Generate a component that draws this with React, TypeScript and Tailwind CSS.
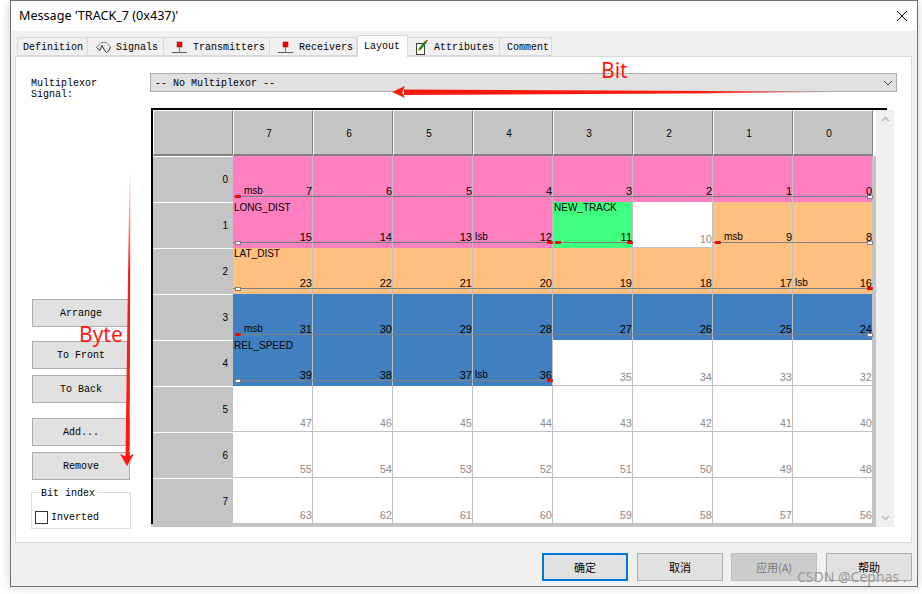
import React from "react";

type Bar = { left: number; width: number; startRed: boolean; endRed: boolean };
type Tag = { text: string; left: number; top: number };

// cell colours for the eight data rows, most significant bit first
const P = "bg-[#ff80c0]";
const O = "bg-[#ffc080]";
const G = "bg-[#40ff80]";
const B = "bg-[#4080c0]";
const W = "bg-white";

const rows: { fills: string[]; bars: Bar[]; tags: Tag[] }[] = [
  {
    fills: [P, P, P, P, P, P, P, P],
    bars: [{ left: 0, width: 640, startRed: true, endRed: false }],
    tags: [{ text: "msb", left: 11, top: 28 }],
  },
  {
    fills: [P, P, P, P, G, W, O, O],
    bars: [
      { left: 0, width: 320, startRed: false, endRed: true },
      { left: 320, width: 80, startRed: true, endRed: true },
      { left: 480, width: 160, startRed: true, endRed: false },
    ],
    tags: [
      { text: "LONG_DIST", left: 1, top: -1 },
      { text: "NEW_TRACK", left: 321, top: -1 },
      { text: "lsb", left: 242, top: 28 },
      { text: "msb", left: 491, top: 28 },
    ],
  },
  {
    fills: [O, O, O, O, O, O, O, O],
    bars: [{ left: 0, width: 640, startRed: false, endRed: true }],
    tags: [
      { text: "LAT_DIST", left: 1, top: -1 },
      { text: "lsb", left: 562, top: 28 },
    ],
  },
  {
    fills: [B, B, B, B, B, B, B, B],
    bars: [{ left: 0, width: 640, startRed: true, endRed: false }],
    tags: [{ text: "msb", left: 11, top: 28 }],
  },
  {
    fills: [B, B, B, B, W, W, W, W],
    bars: [{ left: 0, width: 320, startRed: false, endRed: true }],
    tags: [
      { text: "REL_SPEED", left: 1, top: -1 },
      { text: "lsb", left: 242, top: 28 },
    ],
  },
  { fills: [W, W, W, W, W, W, W, W], bars: [], tags: [] },
  { fills: [W, W, W, W, W, W, W, W], bars: [], tags: [] },
  { fills: [W, W, W, W, W, W, W, W], bars: [], tags: [] },
];

const sans = "font-['Liberation_Sans',Arial,sans-serif]";
const mono = "font-['Liberation_Mono','Courier_New',monospace]";
const cjk = "font-['Noto_Sans_CJK_SC','Noto_Sans',sans-serif]";

function WaveIcon() {
  return (
    <svg width="15" height="11" viewBox="0 0 15 11" fill="none">
      <path d="M0.5 5.5 L5 0.5 L10.5 0.5 L14.5 5" stroke="#8a8a8a" strokeWidth="1" />
      <path d="M0.5 5.5 L4 8.5 L6 3.5 L9 9 L10.5 10.5 L13 8.5 L14.5 5" stroke="#303030" strokeWidth="1" />
    </svg>
  );
}

function NodeIcon() {
  return (
    <svg width="15" height="14" viewBox="0 0 15 14" fill="none">
      <rect x="5" y="1" width="5" height="5" fill="#ff0000" stroke="#800000" strokeWidth="0.5" />
      <path d="M7.5 6 V11" stroke="#808080" />
      <path d="M0 11.5 H15" stroke="#606060" />
    </svg>
  );
}

function NoteIcon() {
  return (
    <svg width="13" height="15" viewBox="0 0 13 15" fill="none">
      <rect x="0.5" y="3.5" width="8" height="11" fill="#ffffff" stroke="#404040" />
      <path d="M3 10 L10 1.5" stroke="#208020" strokeWidth="2.4" />
      <path d="M10 1.5 L11.5 0" stroke="#c04000" strokeWidth="1.5" />
      <path d="M2.5 10.8 L3.5 9" stroke="#e0c000" strokeWidth="1.5" />
    </svg>
  );
}

function Tab({
  label,
  icon,
  layout,
  active,
}: {
  label: string;
  icon?: React.ReactNode;
  layout: string;
  active?: boolean;
}) {
  if (active) {
    return (
      <div
        className={`${layout} h-[22px] -mb-px z-10 bg-white border border-b-0 border-[#d9d9d9] pl-[6px] pt-[4px] text-[10px] leading-[13px] text-black`}
      >
        {label}
      </div>
    );
  }
  return (
    <div
      className={`${layout} h-[19px] flex items-center bg-[#f0f0f0] border border-l-0 first:border-l border-[#d9d9d9] pt-[2px] text-[10px] text-black`}
    >
      {icon}
      <span>{label}</span>
    </div>
  );
}

function SideButton({ label, className = "" }: { label: string; className?: string }) {
  return (
    <div
      className={`w-[98px] h-[28px] flex items-center justify-center bg-[#e1e1e1] border border-[#adadad] text-[10px] text-black ${className}`}
    >
      {label}
    </div>
  );
}

function DialogButton({
  label,
  variant = "normal",
  className = "",
}: {
  label: string;
  variant?: "normal" | "default" | "disabled";
  className?: string;
}) {
  const look =
    variant === "default"
      ? "border-2 border-[#0078d7] bg-[#e1e1e1] text-black"
      : variant === "disabled"
        ? "border border-[#bfbfbf] bg-[#cccccc] text-[#7a7a7a]"
        : "border border-[#adadad] bg-[#e1e1e1] text-black";
  return (
    <div className={`w-[86px] h-[28px] flex items-center justify-center text-[11px] ${cjk} ${look} ${className}`}>
      {label}
    </div>
  );
}

function Marker({ red, side }: { red: boolean; side: "left" | "right" }) {
  return (
    <div
      className={`absolute w-[6px] ${
        red
          ? "top-[-1px] h-[3px] bg-[#ff0000] border-x border-[#a04040]"
          : "top-[-1px] h-[4px] bg-white border border-[#808080]"
      } ${side === "left" ? "left-[2px]" : "right-0"}`}
    />
  );
}

function ColumnHead({ label }: { label: string }) {
  return (
    <div className="w-[80px] h-[46px] flex items-center justify-center pr-[8px] pt-[1px] bg-[#c4c4c4] border-t border-l border-t-white border-l-white border-b-2 border-r border-b-[#808080] border-r-[#808080] text-[10px] text-black">
      {label}
    </div>
  );
}

function ByteGrid() {
  return (
    <div className={`w-[723px] shrink-0 ${sans}`}>
      <div className="flex">
        <ColumnHead label="" />
        {[7, 6, 5, 4, 3, 2, 1, 0].map((n) => (
          <ColumnHead key={n} label={String(n)} />
        ))}
      </div>
      {rows.map((row, r) => (
        <div key={r} className="flex h-[46px]">
          <div className="w-[80px] h-[46px] flex items-center justify-end pr-[5px] pb-[1px] bg-[#c4c4c4] border-t border-white text-[10px] text-black">
            {r}
          </div>
          <div className="relative flex w-[640px]">
            {row.fills.map((fill, c) => {
              const index = r * 8 + (7 - c);
              const blank = fill === W;
              return (
                <div
                  key={c}
                  className={`w-[80px] h-[46px] relative border-r border-[#c0c0c0] ${fill} ${blank ? "border-b" : ""}`}
                >
                  <span
                    className={`absolute right-0 text-[11px] leading-[13px] ${
                      blank ? "top-[31px] text-[#8c8c8c]" : "top-[29px] text-black"
                    }`}
                  >
                    {index}
                  </span>
                </div>
              );
            })}
            {row.bars.map((bar, i) => (
              <div
                key={i}
                className="absolute top-[40px] h-px bg-[#808080]"
                style={{ left: bar.left, width: bar.width }}
              >
                <Marker red={bar.startRed} side="left" />
                <Marker red={bar.endRed} side="right" />
              </div>
            ))}
            {row.tags.map((tag) => (
              <span
                key={tag.text + tag.left}
                className="absolute text-[10px] leading-[13px] text-black"
                style={{ left: tag.left, top: tag.top }}
              >
                {tag.text}
              </span>
            ))}
          </div>
          <div className="w-[3px] bg-[#c4c4c4]" />
        </div>
      ))}
      <div className="relative h-[3px] w-[725px] -ml-[2px] bg-[#c4c4c4]" />
    </div>
  );
}

export default function App() {
  return (
    <div className="relative w-[922px] h-[594px] overflow-hidden bg-white">
      <div
        className={`ml-[10px] w-[908px] h-[587px] flex flex-col bg-[#f0f0f0] border border-[#6e6e6e] shadow-[0_0_10px_rgba(0,0,0,0.18)] ${mono}`}
      >
        {/* title bar */}
        <div className="h-[30px] shrink-0 flex items-center justify-between bg-white pl-[8px] pr-[9px]">
          <span className="text-[12.6px] text-black font-['Noto_Sans',sans-serif]">
            Message 'TRACK_7 (0x437)'
          </span>
          <svg width="12" height="12" viewBox="0 0 12 12" fill="none">
            <path d="M1 1 L11 11 M11 1 L1 11" stroke="#000000" strokeWidth="1" />
          </svg>
        </div>

        {/* tab strip */}
        <div className="flex items-end h-[25px] shrink-0 pl-[6px]">
          <Tab label="Definition" layout="w-[71px] pl-[5px]" />
          <Tab label="Signals" layout="w-[76px] pl-[8px] gap-[5px]" icon={<WaveIcon />} />
          <Tab label="Transmitters" layout="w-[106px] pl-[8px] gap-[6px]" icon={<NodeIcon />} />
          <Tab label="Receivers" layout="w-[87px] pl-[8px] gap-[6px]" icon={<NodeIcon />} />
          <Tab label="Layout" layout="w-[51px]" active />
          <Tab label="Attributes" layout="w-[92px] pl-[8px] gap-[5px]" icon={<NoteIcon />} />
          <Tab label="Comment" layout="w-[52px] pl-[7px]" />
        </div>

        {/* page body */}
        <div className="mx-[4px] w-[897px] h-[487px] shrink-0 flex bg-white border border-[#d9d9d9]">
          <div className="w-[134px] shrink-0 pl-[15px] flex flex-col">
            <div className="mt-[21px] text-[10px] leading-[11px] text-black">
              Multiplexor
              <br />
              Signal:
            </div>
            <div className="mt-[199px] ml-[1px] flex flex-col">
              <SideButton label="Arrange" />
              <SideButton label="To Front" className="mt-[14px]" />
              <SideButton label="To Back" className="mt-[6px]" />
              <SideButton label="Add..." className="mt-[15px]" />
              <SideButton label="Remove" className="mt-[6px]" />
            </div>
            <div className="relative mt-[12px] w-[100px] h-[37px] border border-[#dcdcdc] pl-[3px] pt-[14px] flex items-center gap-[3px] text-[10px] text-black">
              <span className="absolute left-[7px] top-[-5px] bg-white px-[2px] leading-[12px]">Bit index</span>
              <span className="w-[13px] h-[13px] border border-[#333333] bg-white" />
              <span>Inverted</span>
            </div>
          </div>

          <div className="flex-1 min-w-0">
            <div className="mt-[16px] w-[747px] h-[19px] flex items-center justify-between bg-[#e1e1e1] border border-[#adadad] pl-[4px] pr-[3px] pt-[1px] text-[10px] text-black">
              <span>-- No Multiplexor --</span>
              <svg width="10" height="6" viewBox="0 0 10 6" fill="none">
                <path d="M1 1 L5 5 L9 1" stroke="#444444" strokeWidth="1" />
              </svg>
            </div>

            <div className="mt-[16px] ml-[1px] w-[736px] border-t-2 border-l-2 border-black">
              <div className="flex">
                <ByteGrid />
                <div className="w-[18px] shrink-0 flex flex-col justify-between items-center bg-[#f0f0f0] py-[6px]">
                  <svg width="9" height="6" viewBox="0 0 9 6" fill="none">
                    <path d="M1 5 L4.5 1.5 L8 5" stroke="#bdbdbd" strokeWidth="1.6" />
                  </svg>
                  <svg width="9" height="6" viewBox="0 0 9 6" fill="none">
                    <path d="M1 1 L4.5 4.5 L8 1" stroke="#bdbdbd" strokeWidth="1.6" />
                  </svg>
                </div>
              </div>
            </div>
          </div>
        </div>

        {/* dialog buttons */}
        <div className="flex justify-end gap-[9px] pt-[10px] pr-[5px]">
          <DialogButton label="确定" variant="default" />
          <DialogButton label="取消" />
          <DialogButton label="应用(A)" variant="disabled" className="-ml-px" />
          <DialogButton label="帮助" />
        </div>
      </div>

      {/* hand-drawn notes lying over the dialog */}
      <svg className="absolute left-0 top-0 pointer-events-none" width="922" height="594" fill="none">
        <defs>
          <linearGradient id="bitFade" x1="393" y1="0" x2="830" y2="0" gradientUnits="userSpaceOnUse">
            <stop offset="0" stopColor="#ff1a10" />
            <stop offset="0.7" stopColor="#ff1a10" />
            <stop offset="1" stopColor="#ff1a10" stopOpacity="0" />
          </linearGradient>
          <linearGradient id="byteFade" x1="0" y1="170" x2="0" y2="465" gradientUnits="userSpaceOnUse">
            <stop offset="0" stopColor="#ff1a10" stopOpacity="0" />
            <stop offset="0.35" stopColor="#ff1a10" />
            <stop offset="1" stopColor="#ff1a10" />
          </linearGradient>
        </defs>
        <path d="M404 89.5 L830 91.5 L830 92.5 L404 95 Z" fill="url(#bitFade)" />
        <path d="M392 92 L405 86 L402 92 L405 98 Z" fill="#ff1a10" />
        <path d="M129.5 170 L130.5 170 L129.5 458 L125.5 458 Z" fill="url(#byteFade)" />
        <path d="M127 466 L120 454 L127 457 L134 454 Z" fill="#ff1a10" />
      </svg>
      <span className="absolute left-[601px] top-[56px] text-[21px] leading-[28px] text-[#ff1a10] font-['Noto_Sans',sans-serif]">
        Bit
      </span>
      <span className="absolute left-[79px] top-[320px] text-[21px] leading-[28px] text-[#ff1a10] font-['Noto_Sans',sans-serif]">
        Byte
      </span>
      <span className="absolute left-[797px] top-[568px] text-[14px] leading-[18px] text-[#9a9a9a] font-['Noto_Sans',sans-serif]">
        CSDN @Cephas .
      </span>
    </div>
  );
}
